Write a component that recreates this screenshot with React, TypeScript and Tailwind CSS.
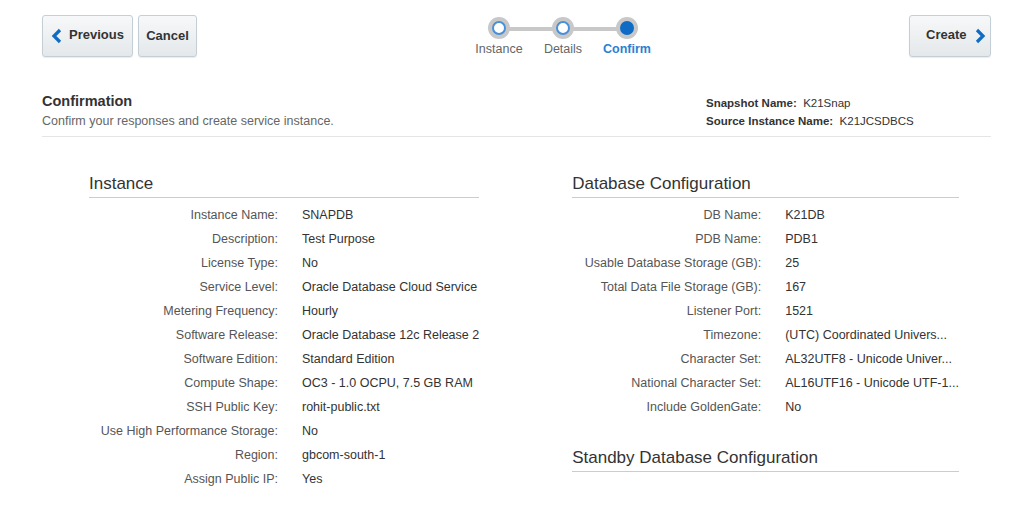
import React from "react";

const inst: [string, string][] = [
  ["Instance Name:", "SNAPDB"],
  ["Description:", "Test Purpose"],
  ["License Type:", "No"],
  ["Service Level:", "Oracle Database Cloud Service"],
  ["Metering Frequency:", "Hourly"],
  ["Software Release:", "Oracle Database 12c Release 2"],
  ["Software Edition:", "Standard Edition"],
  ["Compute Shape:", "OC3 - 1.0 OCPU, 7.5 GB RAM"],
  ["SSH Public Key:", "rohit-public.txt"],
  ["Use High Performance Storage:", "No"],
  ["Region:", "gbcom-south-1"],
  ["Assign Public IP:", "Yes"],
];
const db: [string, string][] = [
  ["DB Name:", "K21DB"],
  ["PDB Name:", "PDB1"],
  ["Usable Database Storage (GB):", "25"],
  ["Total Data File Storage (GB):", "167"],
  ["Listener Port:", "1521"],
  ["Timezone:", "(UTC) Coordinated Univers..."],
  ["Character Set:", "AL32UTF8 - Unicode Univer..."],
  ["National Character Set:", "AL16UTF16 - Unicode UTF-1..."],
  ["Include GoldenGate:", "No"],
];

const btn = "h-[42px] rounded-[3px] border border-[#c4ced7] bg-gradient-to-b from-[#f7f8f9] to-[#e4e8ea] text-[13px] font-bold text-[#333] flex items-center shadow-[0_1px_1px_rgba(0,0,0,0.08)]";

function Rows({ rows, labelW }: { rows: [string, string][]; labelW: string }) {
  return (
    <div className="mt-[6px] flex flex-col">
      {rows.map(([l, v]) => (
        <div key={l} className="flex h-[24px] items-center text-[12.5px]">
          <div className={`${labelW} text-right text-[#555]`}>{l}</div>
          <div className="ml-[24px] text-[#333] whitespace-nowrap">{v}</div>
        </div>
      ))}
    </div>
  );
}

function Step({ label, active }: { label: string; active?: boolean }) {
  return (
    <div className="flex flex-col items-center w-[64px]">
      <div className="w-[22px] h-[22px] rounded-full bg-[#c8c8c8] flex items-center justify-center relative z-10">
        <div className={`w-[14px] h-[14px] rounded-full ${active ? "bg-[#0f6bc4]" : "bg-white border-2 border-[#4a90d9]"}`} />
      </div>
      <div className={`mt-[1px] text-[12.5px] ${active ? "text-[#2c7fd1] font-bold" : "text-[#666]"}`}>{label}</div>
    </div>
  );
}

export default function App() {
  return (
    <div className="w-[1024px] h-[516px] bg-white overflow-hidden" style={{ fontFamily: '"Liberation Sans", Arial, sans-serif' }}>
      <div className="flex items-start pl-[42px] pr-[33px] pt-[15px] h-[80px] relative">
        <div className="flex gap-[5px]">
          <button className={`${btn} w-[91px] pl-[8px]`}>
            <svg width="12" height="16" viewBox="0 0 12 16"><path d="M9 2 L3 8 L9 14" stroke="#0f6bc4" strokeWidth="3.2" fill="none" /></svg>
            <span className="ml-[6px] -mt-[2px]">Previous</span>
          </button>
          <button className={`${btn} w-[59px] justify-center`}>Cancel</button>
        </div>
        <div className="absolute left-[467px] top-[17px] flex">
          <div className="absolute top-[10px] left-[32px] w-[128px] h-[4px] bg-[#c8c8c8]" />
          <Step label="Instance" />
          <Step label="Details" />
          <Step label="Confirm" active />
        </div>
        <div className="ml-auto">
          <button className={`${btn} w-[82px] pl-[16px]`}>
            <span className="-mt-[2px]">Create</span>
            <svg className="ml-[8px]" width="12" height="16" viewBox="0 0 12 16"><path d="M3 2 L9 8 L3 14" stroke="#0f6bc4" strokeWidth="3.2" fill="none" /></svg>
          </button>
        </div>
      </div>
      <div className="ml-[42px] mr-[33px] flex justify-between border-b border-[#e5e5e5] pb-[5px] pt-[12px]">
        <div>
          <div className="text-[14.5px] font-bold text-[#333] leading-[18px]">Confirmation</div>
          <div className="text-[12.5px] text-[#666] mt-[2px]">Confirm your responses and create service instance.</div>
        </div>
        <div className="w-[285px] text-[11.5px] text-[#333] leading-[18px] pt-[2px]">
          <div><b>Snapshot Name:</b>&nbsp; K21Snap</div>
          <div><b>Source Instance Name:</b>&nbsp; K21JCSDBCS</div>
        </div>
      </div>
      <div className="flex px-[89px] pt-[36px] gap-[93px]">
        <div className="w-[398px]">
          <div className="text-[17px] text-[#333] border-b border-[#ccc] pb-[2px] leading-[22px]">Instance</div>
          <Rows rows={inst} labelW="w-[189px]" />
        </div>
        <div className="w-[394px]">
          <div className="text-[17px] text-[#333] border-b border-[#ccc] pb-[2px] leading-[22px]">Database Configuration</div>
          <Rows rows={db} labelW="w-[189px]" />
          <div className="mt-[27px] text-[17px] text-[#333] border-b border-[#ccc] pb-[2px] leading-[22px]">Standby Database Configuration</div>
        </div>
      </div>
    </div>
  );
}
